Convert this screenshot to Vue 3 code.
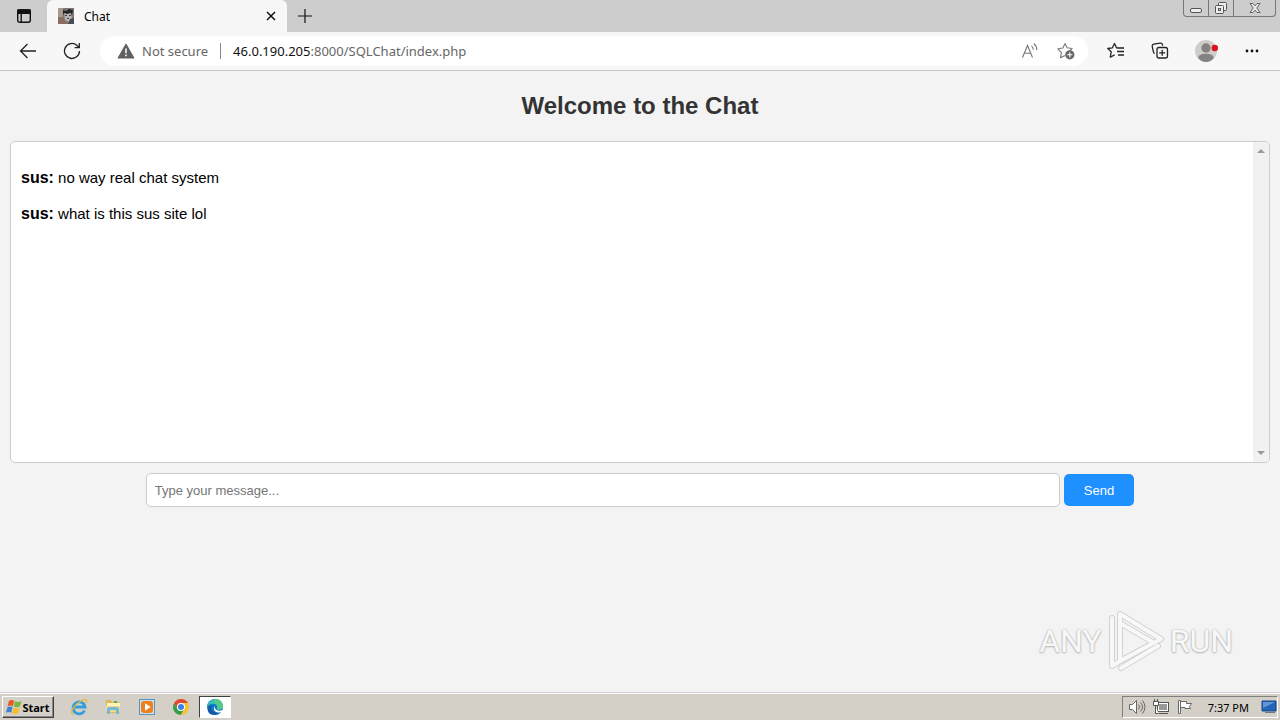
<template>
  <div class="screen">
    <header class="tab-strip">
      <button class="workspace" aria-label="Tab actions">
        <svg width="16" height="16" viewBox="0 0 16 16" fill="none" stroke="#111" stroke-width="1.4">
          <rect x="1.7" y="2" width="12.6" height="12.3" rx="2" />
          <path d="M2 2h12v3.4H2z" fill="#111" />
          <path d="M5.2 5v9" />
        </svg>
      </button>
      <div class="tab">
        <svg class="favicon" width="16" height="16" viewBox="0 0 16 16">
          <path d="M0 0h16v16H0z" fill="#807570" />
          <path d="M0 0h5v9H0z" fill="#a69a8d" />
          <path d="M5 2l3 1 3-2 4 1-1 5-5 2-4-3z" fill="#25262b" />
          <path d="M6 5l3 1 4-1 1 5-3 4-4-2z" fill="#b7b2b5" />
          <path d="M7 7h2v1H7zM11 7h2v1h-2zM9 10h2v1H9z" fill="#45444a" />
          <path d="M0 11l5-2 3 7H0z" fill="#8e6d60" />
          <path d="M12 11l4-1v6h-6z" fill="#494b57" />
        </svg>
        <span class="tab-title">Chat</span>
        <button class="tab-close" aria-label="Close tab">
          <svg width="10" height="10" viewBox="0 0 10 10" stroke="#111" stroke-width="1.5">
            <path d="M1 1l8 8M9 1l-8 8" />
          </svg>
        </button>
      </div>
      <button class="new-tab" aria-label="New tab">
        <svg width="16" height="16" viewBox="0 0 16 16" stroke="#111" stroke-width="1.2">
          <path d="M8 1v14M1 8h14" />
        </svg>
      </button>
      <div class="window-buttons">
        <button aria-label="Minimize">
          <svg width="14" height="14" viewBox="0 0 14 14" fill="#eee" stroke="#555">
            <rect x="1.5" y="7.5" width="11" height="4" rx="1.5" />
          </svg>
        </button>
        <button aria-label="Restore">
          <svg width="14" height="14" viewBox="0 0 14 14" fill="#eee" stroke="#555">
            <rect x="4.5" y="1.5" width="8" height="8" rx="1" />
            <rect x="1.5" y="4.5" width="8" height="8" rx="1" />
            <rect x="4.5" y="7.5" width="2" height="2" />
          </svg>
        </button>
        <button class="wide" aria-label="Close window">
          <svg width="12" height="12" viewBox="0 0 12 12" fill="#eee" stroke="#555" stroke-width="0.9">
            <path d="M1 1.5h3l2 2.4 2-2.4h3L7.7 6 11 10.5H8L6 8.1 4 10.5H1L4.3 6z" />
          </svg>
        </button>
      </div>
    </header>

    <nav class="toolbar">
      <button aria-label="Back">
        <svg width="18" height="18" viewBox="0 0 18 18" fill="none" stroke="#222" stroke-width="1.3">
          <path d="M17 9H1.5M8.5 2L1.5 9l7 7" />
        </svg>
      </button>
      <button class="reload" aria-label="Refresh">
        <svg width="18" height="18" viewBox="0 0 18 18" fill="none" stroke="#222" stroke-width="1.3">
          <path d="M16.5 9A7.5 7.5 0 1 1 13.8 3.2L16 5.4M16.3 1v4.7h-4.7" />
        </svg>
      </button>
      <div class="address">
        <svg width="18" height="16" viewBox="0 0 18 16">
          <path d="M9 1.2L16.8 15H1.2z" fill="#606060" stroke="#606060" stroke-width="1.2" stroke-linejoin="round" />
          <path d="M9 5.5v4.8M9 11.5v1.7" stroke="#fff" stroke-width="1.5" />
        </svg>
        <span class="security">Not secure</span>
        <span class="divider"></span>
        <span class="url"><b>46.0.190.205</b>:8000/SQLChat/index.php</span>
        <button aria-label="Read aloud">
          <svg width="18" height="18" viewBox="0 0 18 18" fill="none" stroke="#777" stroke-width="1.1">
            <path d="M1.5 15.5L6.5 3.5l5 12M3.2 11.3h6.6M10.5 3.8a5.5 5.5 0 0 1 1.8 3.9M12.8 1.5a8.5 8.5 0 0 1 3 6.5" />
          </svg>
        </button>
        <button class="favorite" aria-label="Add to favorites">
          <svg width="18" height="18" viewBox="0 0 18 18">
            <path d="M8 1.5l2.1 4.3 5 .7-3.5 3.3M8 13.5l-4.5 2.3.9-5.1L.9 6.8l5-.8L8 1.5" fill="none" stroke="#777" stroke-width="1.1" stroke-linejoin="round" />
            <circle cx="12.8" cy="12.8" r="4.6" fill="#666" />
            <path d="M12.8 10.2v5.2M10.2 12.8h5.2" stroke="#fff" stroke-width="1.1" />
          </svg>
        </button>
      </div>
      <button aria-label="Favorites">
        <svg width="18" height="18" viewBox="0 0 18 18" fill="none" stroke="#222" stroke-width="1.3" stroke-linejoin="round">
          <path d="M11.2 6L9.5 5.8 7.5 1.5 5.4 5.8l-4.6.7 3.4 3.3-.9 5.4 4.3-2.3M11 6h6M10 9.5h7M11 13h6" />
        </svg>
      </button>
      <button aria-label="Collections">
        <svg width="18" height="18" viewBox="0 0 18 18" fill="none" stroke="#222" stroke-width="1.3">
          <path d="M3.8 11.5a2 2 0 0 1-1.4-1.7L1.2 4.3a2 2 0 0 1 1.5-2.2l6.6-1a2 2 0 0 1 2.2 1.6l.2 1" />
          <rect x="6" y="5.5" width="10.5" height="10.5" rx="2" />
          <path d="M11.2 7.8v6M8.2 10.8h6" />
        </svg>
      </button>
      <button class="profile" aria-label="Profile">
        <svg width="24" height="24" viewBox="0 0 24 24">
          <circle cx="12" cy="12" r="11" fill="#cfcdca" />
          <circle cx="12" cy="9" r="4.7" fill="#858381" />
          <path d="M4.3 19c0-3 3.4-4.3 7.7-4.3s7.7 1.3 7.7 4.3c-2 2.5-4.7 4-7.7 4s-5.7-1.5-7.7-4z" fill="#858381" />
          <circle cx="20.8" cy="9" r="3.2" fill="#dc1220" />
        </svg>
      </button>
      <button aria-label="Settings and more">
        <svg width="18" height="18" viewBox="0 0 18 18" fill="#111">
          <circle cx="4" cy="9" r="1.4" />
          <circle cx="9" cy="9" r="1.4" />
          <circle cx="14" cy="9" r="1.4" />
        </svg>
      </button>
    </nav>

    <main class="page">
      <h2>Welcome to the Chat</h2>
      <section class="chat-box">
        <div class="messages">
          <p v-for="message in messages" :key="message.text">
            <strong>{{ message.user }}:</strong> {{ message.text }}
          </p>
        </div>
        <div class="scrollbar">
          <svg width="8" height="4" viewBox="0 0 8 4"><path d="M0 4l4-4 4 4z" fill="#999" /></svg>
          <svg width="8" height="4" viewBox="0 0 8 4"><path d="M0 0l4 4 4-4z" fill="#999" /></svg>
        </div>
      </section>
      <form class="message-form" @submit.prevent="sendMessage">
        <input v-model="draft" type="text" placeholder="Type your message..." aria-label="Message" />
        <button type="submit">Send</button>
      </form>

      <div class="watermark">
        <span>ANY</span>
        <svg width="60" height="66" viewBox="0 0 60 66" fill="none" stroke-linejoin="round" stroke-linecap="round">
          <g stroke="#d2d2d2" stroke-width="6">
            <path d="M6 10v48l8-5M15 60l37-22" />
            <path d="M14 52V6l41 25-41 22" />
            <path d="M14 15l34 20" />
          </g>
          <g stroke="#f8f8f8" stroke-width="4">
            <path d="M6 10v48l8-5M15 60l37-22" />
            <path d="M14 52V6l41 25-41 22" />
            <path d="M14 15l34 20" />
          </g>
        </svg>
        <span>RUN</span>
      </div>
    </main>

    <footer class="taskbar">
      <button class="start">
        <svg width="16" height="16" viewBox="0 0 16 16">
          <path d="M3 1.8c2-1.2 3.6-1 5.2 0L6.8 7.2c-1.600-1-3.200-1-5.200 0z" fill="#e8572a" />
          <path d="M9 2.300c1.800 1 3.800 1 6.500-.3L14 7.500c-2.200 1.100-4.200 1.100-6.300 0z" fill="#79b83c" />
          <path d="M1.400 8.200c2-1 3.600-1 5.200 0L5.200 13.800c-1.600-1-3.200-1-5.200 0z" fill="#3b83cf" />
          <path d="M7.500 8.700c1.900 1 3.900 1 6.200 0l-1.500 5.500c-2.200 1.100-4.200 1.100-6.200 0z" fill="#f6bd2c" />
        </svg>
        Start
      </button>
      <button class="task" aria-label="Internet Explorer">
        <svg width="18" height="18" viewBox="0 0 18 18" fill="none">
          <path d="M14.5 12.5A6 6 0 1 1 15 9H4" stroke="#319fdc" stroke-width="2.8" />
          <path d="M3 16.5C-1 15 4 7 11 3c5-3 7-1 5 2" stroke="#e7b93b" stroke-width="1.4" />
        </svg>
      </button>
      <button class="task" aria-label="File Explorer">
        <svg width="18" height="18" viewBox="0 0 18 18">
          <path d="M2 2h5l1 2h8v11H2z" fill="#dcb956" />
          <path d="M3 5h13v3H3z" fill="#fff4bc" />
          <path d="M2 8h14v6H2z" fill="#f2db88" />
          <path d="M3 16v-5q0-2 2-2h8q2 0 2 2v5h-3v-4H6v4z" fill="#72b9dc" />
          <path d="M10 3h3v2h-3z" fill="#58ad57" />
        </svg>
      </button>
      <button class="task" aria-label="Media Player">
        <svg width="18" height="18" viewBox="0 0 18 18">
          <rect x="1.5" y="1.5" width="15" height="15" fill="#c7e2f4" stroke="#5b93bd" />
          <rect x="3" y="3" width="12" height="12" rx="3" fill="#ef7f18" />
          <path d="M7 5.3L12.8 9 7 12.7z" fill="#fff" />
        </svg>
      </button>
      <button class="task" aria-label="Chrome">
        <svg width="18" height="18" viewBox="0 0 18 18">
          <circle cx="9" cy="9" r="8" fill="#f4c533" />
          <path d="M2.1 5A8 8 0 0 1 16 5H9a4 4 0 0 0-3.5 6z" fill="#df4936" />
          <path d="M2.1 5a8 8 0 0 0 6.5 12l3.9-6.5A4 4 0 0 1 5.5 11z" fill="#329e50" />
          <circle cx="9" cy="9" r="4" fill="#fff" />
          <circle cx="9" cy="9" r="3" fill="#397fe6" />
        </svg>
      </button>
      <button class="task active" aria-label="Edge">
        <svg width="18" height="18" viewBox="0 0 18 18">
          <circle cx="9" cy="9" r="8" fill="#1479c8" />
          <path d="M1 9C2 1 13-2 16.5 6c2 5-3 7-6 5 2-3-1-6-4-5C4 6 2 7 1 9z" fill="#35bfb7" />
          <path d="M8 1c5-1 9 3 9 7s-4 4-6 3c2-4-1-6-3-5z" fill="#63ce72" opacity="0.7" />
          <path d="M6 7c-2 5 2 9 8 7-4 5-13 3-12-3 0-2 2-4 4-4z" fill="#135ba6" />
          <path d="M9 8c-1 3 2 6 8 4l-1 2c-6 2-10-2-7-6z" fill="#fff" />
        </svg>
      </button>
      <div class="tray">
        <button aria-label="Volume">
          <svg width="18" height="16" viewBox="0 0 18 16" fill="none" stroke="#666">
            <path d="M1.5 5.500h3l4-4v13l-4-4h-3z" fill="#fff" />
            <path d="M10.5 5.500q2 2.500 0 5M12.500 3.500q4 4.500 0 9M14.500 1.500q5 6.500 0 13" />
          </svg>
        </button>
        <button aria-label="Network">
          <svg width="18" height="16" viewBox="0 0 18 16" fill="#fff" stroke="#555">
            <rect x="5.5" y="3.5" width="11" height="9" />
            <path d="M7 5h8v6H7z" fill="#999" stroke="none" />
            <path d="M7 14.500h9M1.500 2.500h5v4h-5zM2.500 0v2M5.500 0v2M3.500 7v7.500h3" />
          </svg>
        </button>
        <button aria-label="Action Center">
          <svg width="18" height="16" viewBox="0 0 18 16" fill="#fff" stroke="#666">
            <path d="M2.500 1.500h2v13h-2zM4.500 2.500h6v2h5l-2 3 1 2H9v-1H4.500z" />
          </svg>
        </button>
        <time>7:37 PM</time>
        <button class="desktop" aria-label="Show desktop">
          <svg width="16" height="14" viewBox="0 0 16 14">
            <path d="M1 1h14v10H1z" fill="#2365b8" stroke="#174481" />
            <path d="M2 2h12L2 8z" fill="#6196d7" />
            <path d="M4 12h10v1H4z" fill="#6d7984" />
          </svg>
        </button>
      </div>
    </footer>
  </div>
</template>

<script setup>
import { ref } from 'vue';

const draft = ref('');
const messages = ref([
  { user: 'sus', text: 'no way real chat system' },
  { user: 'sus', text: 'what is this sus site lol' }
]);

const sendMessage = () => {
  if (!draft.value.trim()) return;
  messages.value.push({ user: 'sus', text: draft.value });
  draft.value = '';
};
</script>

<style>
body {
  margin: 0;
}
</style>

<style scoped>
.screen {
  display: flex;
  flex-direction: column;
  min-height: 100vh;
  background: #f3f3f3;
  font-family: "Liberation Sans", Arial, sans-serif;
}
button {
  display: flex;
  align-items: center;
  justify-content: center;
  padding: 0;
  border: 0;
  background: none;
  color: #000;
  font-family: inherit;
}
svg {
  flex-shrink: 0;
}
.tab-strip {
  display: flex;
  height: 32px;
  background: #cdcdcd;
  font-family: "Noto Sans", sans-serif;
}
.workspace {
  width: 47px;
}
.tab {
  display: flex;
  align-items: center;
  box-sizing: border-box;
  width: 240px;
  padding: 0 10px 0 11px;
  border-radius: 6px 6px 0 0;
  background: #f7f7f7;
}
.tab-title {
  flex: 1;
  padding-left: 10px;
  font-size: 12px;
}
.tab-close {
  width: 12px;
  height: 16px;
}
.new-tab {
  width: 36px;
}
.window-buttons {
  display: flex;
  height: 16px;
  margin-left: auto;
  margin-right: 4px;
  border: 1px solid #777;
  border-top: 0;
  border-radius: 0 0 4px 4px;
}
.window-buttons button {
  width: 25px;
  border-right: 1px solid #777;
}
.window-buttons .wide {
  width: 41px;
  border-right: 0;
}
.toolbar {
  display: flex;
  align-items: center;
  height: 38px;
  padding: 0 6px;
  border-bottom: 1px solid #c6c6c6;
  background: #f7f7f7;
  font-family: "Noto Sans", sans-serif;
}
.toolbar button {
  width: 44px;
  height: 30px;
}
.toolbar .reload {
  margin-right: 6px;
}
.toolbar .profile {
  width: 48px;
}
.address {
  display: flex;
  flex: 1;
  align-items: center;
  height: 30px;
  margin-right: 6px;
  padding-left: 17px;
  border-radius: 16px;
  background: #fff;
  font-size: 13px;
}
.address button {
  width: 36px;
}
.address .favorite {
  margin-right: 4px;
}
.security {
  padding-left: 7px;
  color: #666;
}
.divider {
  width: 1px;
  height: 16px;
  margin: 0 12px;
  background: #888;
}
.url {
  flex: 1;
  color: #666;
}
.url b {
  color: #111;
  font-weight: 400;
}
.page {
  position: relative;
  display: flex;
  flex: 1;
  flex-direction: column;
  padding: 0 10px;
  border-bottom: 1px solid #d4d4d4;
}
h2 {
  margin: 20px 0;
  color: #333;
  font-size: 24px;
  line-height: 30px;
  text-align: center;
}
.chat-box {
  display: flex;
  min-height: 320px;
  border: 1px solid #ccc;
  border-radius: 5px;
  background: #fff;
  overflow: hidden;
}
.messages {
  flex: 1;
  padding: 10px;
}
.messages p {
  margin: 16px 0 0;
  color: #000;
  font-size: 15px;
  line-height: 20px;
}
.messages strong {
  font-size: 16px;
}
.scrollbar {
  display: flex;
  flex-direction: column;
  align-items: center;
  justify-content: space-between;
  box-sizing: border-box;
  width: 16px;
  padding: 7px 0;
  background: #f1f1f1;
}
.message-form {
  display: flex;
  align-items: center;
  justify-content: center;
  gap: 4px;
  margin: 10px -10px 0;
}
.message-form input {
  width: 70%;
  height: 16px;
  padding: 8px;
  border: 1px solid #ccc;
  border-radius: 5px;
  background: #fff;
  font-family: inherit;
  font-size: 13px;
}
.message-form input::placeholder {
  color: #757575;
}
.message-form button {
  height: 32px;
  padding: 0 20px;
  border-radius: 5px;
  background: #1e90ff;
  color: #fff;
  font-size: 13px;
}
.watermark {
  position: absolute;
  right: 47px;
  bottom: 18px;
  display: flex;
  align-items: center;
  gap: 4px;
  color: #f8f8f8;
  font-family: Roboto, "Liberation Sans", sans-serif;
  font-size: 32px;
  text-shadow: 0 0 2px #aaa, 0 1px 2px #bbb;
}
.taskbar {
  display: flex;
  align-items: center;
  box-sizing: border-box;
  height: 27px;
  padding: 0 2px;
  border-top: 1px solid #fff;
  background: #d4d0c8;
  font-family: "Noto Sans", sans-serif;
}
.start {
  box-sizing: border-box;
  width: 52px;
  height: 22px;
  margin-right: 8px;
  border: 1px solid;
  border-color: #fff #404040 #404040 #fff;
  box-shadow: inset -1px -1px #888;
  font-size: 11px;
  font-weight: 700;
}
.task {
  width: 34px;
  height: 22px;
}
.task.active {
  box-sizing: border-box;
  width: 32px;
  margin-left: 1px;
  border: 1px solid;
  border-color: #404040 #fff #fff #404040;
  background: #fff;
}
.tray {
  display: flex;
  align-items: center;
  gap: 6px;
  box-sizing: border-box;
  height: 22px;
  margin-left: auto;
  padding: 0 0 0 5px;
  border: 1px solid;
  border-color: #808080 #fff #fff #808080;
}
time {
  margin-left: 8px;
  font-size: 11px;
}
.desktop {
  margin-left: 6px;
}
</style>
